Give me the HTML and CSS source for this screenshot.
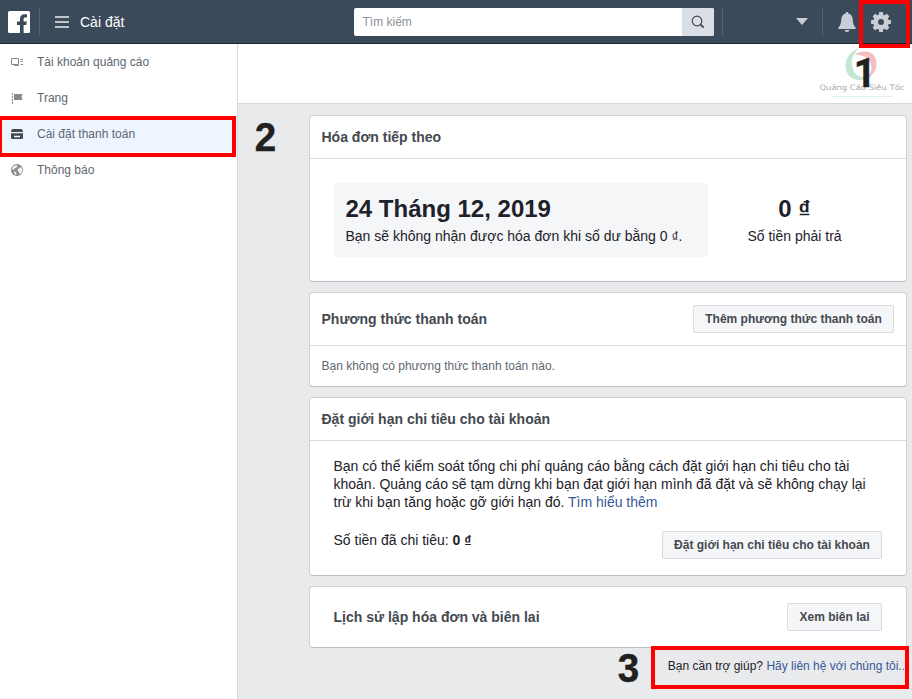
FILE: index.html
```html
<!DOCTYPE html>
<html lang="vi">
<head>
<meta charset="utf-8">
<title>Cài đặt</title>
<link rel="stylesheet" href="styles.css">
</head>
<body>
<div class="app">
  <header class="topbar">
    <svg class="logo" viewBox="0 0 22 22"><rect width="22" height="22" rx="1.500" fill="#fff"/><path d="M12 22v-8H9v-3.500h3V8c0-3.200 1.700-4.800 4.500-4.800h2.500v3.300h-1.700c-1.300 0-1.700.6-1.700 1.800v2.200h3.200l-.5 3.500h-2.700v8z" fill="#3b4a5b"/></svg>
    <span class="divider divider-logo"></span>
    <svg class="burger" viewBox="0 0 14 12"><path d="M0 1h14M0 6h14M0 11h14" stroke="#eceef0" stroke-width="1.500"/></svg>
    <span class="title">Cài đặt</span>
    <div class="search">
      <span class="search-text">Tìm kiếm</span>
      <span class="search-button"><svg width="14" height="14" viewBox="0 0 14 14" fill="none" stroke="#444a52" stroke-width="1.200"><circle cx="6" cy="6" r="4.800"/><path d="M9.500 9.500l3.200 3.200" stroke-width="1.800"/></svg></span>
    </div>
    <span class="divider divider-account"></span>
    <svg class="caret" viewBox="0 0 12 7"><path d="M0 0h12L6 7z" fill="#c8cdd6"/></svg>
    <span class="divider divider-tools"></span>
    <svg class="bell" viewBox="0 0 18 20"><path d="M9 0c.9 0 1.400.6 1.400 1.500 3 .8 4.100 3 4.300 6.100.3 4.200 1.100 6.300 3 8.100V17H.3v-1.300c1.900-1.800 2.700-3.900 3-8.100.2-3.100 1.300-5.300 4.300-6.100C7.600.6 8.100 0 9 0zM6.500 18h5c-.4 1.300-1.300 2-2.500 2s-2.100-.7-2.500-2z" fill="#c9cdd5"/></svg>
    <svg class="gear" viewBox="-10 -10 20 20"><g fill="#cbcdd4"><circle r="7.600"/><path d="M-2.500-6.500-1.800-10h3.600L2.500-6.500v13L1.800 10h-3.600L-2.500 6.500z"/><path d="M-2.500-6.500-1.800-10h3.600L2.500-6.500v13L1.800 10h-3.600L-2.500 6.500z" transform="rotate(45)"/><path d="M-2.500-6.500-1.800-10h3.600L2.500-6.500v13L1.800 10h-3.600L-2.500 6.500z" transform="rotate(90)"/><path d="M-2.500-6.500-1.800-10h3.600L2.500-6.500v13L1.800 10h-3.600L-2.500 6.500z" transform="rotate(135)"/></g><circle r="3" fill="#3b4a5b"/></svg>
  </header>
  <div class="body">
    <nav class="sidebar">
      <a class="item"><svg class="icon" viewBox="0 0 14 12" fill="none" stroke="#858a92"><path d="M1.500 2.500h7v6h-7zM4 9.500h5M10.500 3.500h2.500M10.500 5.500h2.500M10.500 8.500h2.500" stroke-width="1"/></svg><span>Tài khoản quảng cáo</span></a>
      <a class="item"><svg class="icon" viewBox="0 0 14 12"><path d="M2.500 1v11" stroke="#858a92" stroke-dasharray="2 1"/><path d="M4 2h8.500l-1 3 1 3H4z" fill="#858a92"/></svg><span>Trang</span></a>
      <a class="item active"><svg class="icon" viewBox="0 0 14 12"><path d="M3 1h8q1.200 0 1.600 1l.4 2H1L1.400 2Q1.800 1 3 1zM1 5.300h12v4.700q0 1-1 1H2q-1 0-1-1z" fill="#444950"/><path d="M4 8.500h6" stroke="#edf5ff" stroke-width="1.500"/></svg><span>Cài đặt thanh toán</span></a>
      <a class="item"><svg class="icon" viewBox="0 0 12 12"><circle cx="6" cy="6" r="6" fill="#888d94"/><path d="M2 2.500 5.500 1l1 1-1 1.500-1.800.8L3 6 1 5zM7 5l3-2 1.500 3-1 3-2 1.200L8 8 6.500 7zM3 7l2 1 .5 2L4 11z" fill="#f1f2f3"/></svg><span>Thông báo</span></a>
    </nav>
    <main class="main">
      <div class="brandbar">
        <div class="brand">
          <svg class="swirl" viewBox="0 0 34 34"><path d="M14 0C-2 6-3 24 7 30c7 4 13 2 17-1-8 1-14-1-16-8C5 13 8 6 14 0z" fill="#c5e6d2"/><path d="M9 7c8-6 18-4 21 2 4 9 0 17-8 22 4-6 6-12 3-17-3-5-9-8-16-7z" fill="#f5bec0"/></svg>
          <span class="brandname">Quảng Cáo Siêu Tốc</span>
          <span class="brandline"></span>
        </div>
      </div>
      <div class="cards">
        <section class="card invoice">
          <h2 class="head">Hóa đơn tiếp theo</h2>
          <div class="invoice-body">
            <div class="datebox"><strong class="big">24 Tháng 12, 2019</strong><span class="copy">Bạn sẽ không nhận được hóa đơn khi số dư bằng 0 <span class="dong">₫</span>.</span></div>
            <div class="due"><strong class="big">0 <span class="dong">₫</span></strong><span class="copy">Số tiền phải trả</span></div>
          </div>
        </section>
        <section class="card method">
          <h2 class="head">Phương thức thanh toán<button class="btn btn-method">Thêm phương thức thanh toán</button></h2>
          <p class="empty">Bạn không có phương thức thanh toán nào.</p>
        </section>
        <section class="card limit">
          <h2 class="head">Đặt giới hạn chi tiêu cho tài khoản</h2>
          <div class="limit-body">
            <p class="copy">Bạn có thể kiểm soát tổng chi phí quảng cáo bằng cách đặt giới hạn chi tiêu cho tài<br>khoản. Quảng cáo sẽ tạm dừng khi bạn đạt giới hạn mình đã đặt và sẽ không chạy lại<br>trừ khi bạn tăng hoặc gỡ giới hạn đó. <a>Tìm hiểu thêm</a></p>
            <div class="spent"><span class="copy">Số tiền đã chi tiêu: <b>0 <span class="dong">₫</span></b></span><button class="btn btn-limit">Đặt giới hạn chi tiêu cho tài khoản</button></div>
          </div>
        </section>
        <section class="card history"><h2>Lịch sử lập hóa đơn và biên lai</h2><button class="btn btn-view">Xem biên lai</button></section>
        <p class="help">Bạn cần trợ giúp? <a>Hãy liên hệ với chúng tôi..</a></p>
      </div>
    </main>
  </div>
  <div class="mark mark-gear"></div><div class="mark mark-pay"></div><div class="mark mark-help"></div>
  <span class="num num-1">1</span><span class="num num-2">2</span><span class="num num-3">3</span>
</div>
</body>
</html>
```
FILE: styles.css
```css
* { box-sizing: border-box; }
body { margin: 0; font-family: "Liberation Sans", Arial, sans-serif; color: #1d2129; }
h2, p { margin: 0; }
a { color: #385898; }
svg { display: block; flex: none; }
.app { position: relative; width: 912px; height: 699px; overflow: hidden; display: flex; flex-direction: column; }
.topbar { height: 44px; flex: none; background: #3b4a5b; border-bottom: 1px solid #20242b; display: flex; align-items: center; padding-left: 8px; }
.logo { width: 22px; height: 22px; }
.divider { width: 1px; height: 28px; background: #536174; }
.divider-logo { margin: 0 15px 0 9px; }
.burger { width: 14px; height: 12px; margin-right: 11px; }
.title { color: #fff; font-size: 14px; width: 274px; white-space: nowrap; }
.search { width: 360px; height: 28px; background: #fff; border-radius: 2px; display: flex; overflow: hidden; }
.search-text { flex: 1; padding-left: 8.500px; font-size: 12px; line-height: 29px; color: #8d9299; }
.search-button { width: 32px; background: #dadee6; display: flex; align-items: center; justify-content: center; }
.divider-account { margin-left: 8px; }
.caret { width: 12px; height: 7px; margin-left: 73px; }
.divider-tools { margin-left: 14px; }
.bell { width: 18px; height: 20px; margin-left: 15px; }
.gear { width: 20px; height: 20px; margin-left: 15px; }
.body { flex: 1; min-height: 0; display: flex; }
.sidebar { width: 238px; flex: none; background: #fff; border-right: 1px solid #d8dadd; }
.item { height: 36px; display: flex; align-items: center; padding-left: 10px; font-size: 12px; color: #606770; white-space: nowrap; }
.item.active { background: #edf5ff; }
.icon { width: 14px; height: 12px; margin-right: 13px; }
.main { flex: 1; min-width: 0; background: #e9eaec; }
.brandbar { height: 60px; background: #fff; border-bottom: 1px solid #d6d8db; padding: 4px 7px 0 0; display: flex; justify-content: flex-end; }
.brand { width: 86px; display: flex; flex-direction: column; align-items: center; }
.swirl { width: 34px; height: 34px; }
.brandname { font: 7.500px/11px "DejaVu Sans", sans-serif; color: #a9a9ad; white-space: nowrap; transform: scaleX(1.12); }
.brandline { width: 60px; height: 1px; margin-top: 3px; background: #e0f2ed; }
.cards { padding: 11px 5px 0 71px; display: flex; flex-direction: column; gap: 10px; }
.card { background: #fff; border: 1px solid #cdd0d4; border-bottom-color: #babdc2; border-radius: 4px; flex: none; }
.card h2 { font-size: 14px; color: #444950; white-space: nowrap; }
.head { border-bottom: 1px solid #d8dade; height: 43px; padding: 0 12px 0 11.500px; display: flex; align-items: center; justify-content: space-between; }
.invoice { height: 167px; }
.invoice-body { display: flex; padding: 24px; }
.datebox { width: 374px; height: 74px; background: #f5f6f8; border-radius: 2px; padding: 12px 11.500px; display: flex; flex-direction: column; }
.big { font-size: 24px; line-height: 28px; white-space: nowrap; }
.copy { font-size: 14px; line-height: 18px; white-space: nowrap; }
.datebox .copy, .due .copy { margin-top: 4px; }
.dong { position: relative; top: 1px; }
.due { flex: 1; padding: 12px 1px 0 0; display: flex; flex-direction: column; align-items: center; }
.method { height: 95px; }
.method .head { height: 53px; }
.empty { padding-left: 11.500px; font-size: 12px; line-height: 40px; color: #606770; }
.btn { height: 28px; padding: 0; border: 1px solid #d8dbe0; border-radius: 2px; background: #f5f6f8; color: #444950; font: bold 12px "Liberation Sans", Arial, sans-serif; white-space: nowrap; }
.btn-method { width: 201px; }
.btn-limit { width: 220px; }
.btn-view { width: 95px; }
.limit { height: 179px; }
.limit-body { padding: 16px 24px 0 23.500px; }
.spent { display: flex; justify-content: space-between; margin-top: 20px; }
.history { height: 62px; padding: 0 24px 0 23.500px; display: flex; align-items: center; justify-content: space-between; }
.help { padding-right: 2px; margin-top: -1px; text-align: right; font-size: 12px; line-height: 18px; white-space: nowrap; }
.mark { position: absolute; border: 4px solid #fe0000; }
.mark-gear { left: 859px; top: 0; width: 51px; height: 48px; }
.mark-pay { left: -2px; top: 116px; width: 238px; height: 41px; }
.mark-help { left: 651px; top: 646px; width: 258px; height: 43px; }
.num { position: absolute; font-size: 41px; line-height: 41px; font-weight: bold; color: #202020; -webkit-text-stroke: .4px #202020; transform: scaleX(.94); }
.num-1 { left: 853px; top: 53px; font-family: Roboto, sans-serif; }
.num-2 { left: 254px; top: 117px; }
.num-3 { left: 617px; top: 648px; }
```
